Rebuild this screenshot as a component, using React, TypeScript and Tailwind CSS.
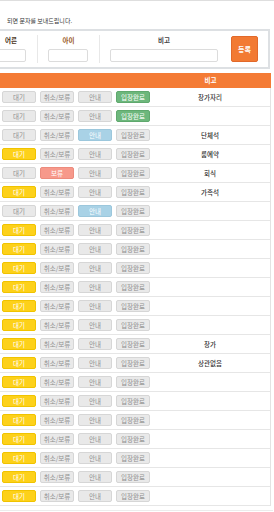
type Tone = "off" | "yellow" | "red" | "blue" | "green";

const toneClass: Record<Tone, string> = {
  off: "bg-[#e9e9e9] border-[#d6d6d6] text-[#8f8f8f]",
  yellow: "bg-[#fdd11a] border-[#f0c300] text-white",
  red: "bg-[#f7998b] border-[#ec8b7d] text-white",
  blue: "bg-[#a9d2e6] border-[#9cc7dc] text-white",
  green: "bg-[#6db77c] border-[#5fa86d] text-white",
};

const activeTone: Tone[] = ["yellow", "red", "blue", "green"];

const rows: { on: number; note: string }[] = [
  { on: 3, note: "창가자리" },
  { on: 3, note: "" },
  { on: 2, note: "단체석" },
  { on: 0, note: "룸예약" },
  { on: 1, note: "회식" },
  { on: 0, note: "가족석" },
  { on: 2, note: "" },
  { on: 0, note: "" },
  { on: 0, note: "" },
  { on: 0, note: "" },
  { on: 0, note: "" },
  { on: 0, note: "" },
  { on: 0, note: "" },
  { on: 0, note: "창가" },
  { on: 0, note: "상관없음" },
  { on: 0, note: "" },
  { on: 0, note: "" },
  { on: 0, note: "" },
  { on: 0, note: "" },
  { on: 0, note: "" },
  { on: 0, note: "" },
  { on: 0, note: "" },
];

const StateButton = ({ label, tone }: { label: string; tone: Tone }) => (
  <button
    className={`w-[34px] h-[12px] p-0 border rounded-[2px] text-[6.5px] leading-[10px] text-center ${toneClass[tone]}`}
  >
    {label}
  </button>
);

const Row = ({ on, note }: { on: number; note: string }) => {
  const labels = ["대기", on === 1 ? "보류" : "취소/보류", "안내", "입장완료"];
  return (
    <div className="h-[19px] border-b border-[#e6e6e6] flex items-center">
      <div className="w-[150px] pl-[2px] flex gap-[4px]">
        {labels.map((label, i) => (
          <StateButton key={i} label={label} tone={i === on ? activeTone[i] : "off"} />
        ))}
      </div>
      <div className="flex-1 text-center text-[6.5px] leading-[10px] font-medium text-[#333]">
        {note}
      </div>
    </div>
  );
};

const App = () => {
  return (
    <div
      className="w-[274px] h-[512px] overflow-hidden bg-white border-t border-[#dedede]"
      style={{ fontFamily: '"Noto Sans CJK KR", "Noto Sans", sans-serif' }}
    >
      <p className="pt-[16px] pl-[7px] h-[24px] text-[6px] leading-[8px] text-[#333] whitespace-nowrap">
        되면 문자를 보내드립니다.
      </p>

      {/* 등록 폼 */}
      <div className="mt-[4px] -ml-[27px] w-[297px] h-[40px] border-2 border-[#dde0e3] flex items-center">
        <div className="w-[63px] h-[28px] pt-[1px] border-r border-[#e8e8e8] flex flex-col">
          <span className="h-[8px] text-center text-[6.5px] leading-[8px] font-bold text-[#4a3520] pl-[10px]">어른</span>
          <input className="mt-[5px] ml-[11px] w-[40px] h-[13px] p-0 border border-[#dcdcdc] rounded-[2px] bg-white" />
        </div>
        <div className="w-[62px] h-[28px] pt-[1px] border-r border-[#e8e8e8] flex flex-col">
          <span className="h-[8px] text-center text-[6.5px] leading-[8px] font-bold text-[#9a5a28]">아이</span>
          <input className="mt-[5px] ml-[10px] w-[40px] h-[13px] p-0 border border-[#dcdcdc] rounded-[2px] bg-white" />
        </div>
        <div className="w-[131px] h-[28px] pt-[1px] flex flex-col">
          <span className="ml-[10px] w-[108px] h-[8px] text-center text-[6.5px] leading-[8px] font-bold text-[#444]">비고</span>
          <input className="mt-[5px] ml-[10px] w-[108px] h-[13px] p-0 border border-[#dcdcdc] rounded-[2px] bg-white" />
        </div>
        <button className="w-[27px] h-[26px] p-0 bg-[#f27a33] border border-[#e2692a] rounded-[2px] text-white text-[7px] font-semibold">
          등록
        </button>
      </div>

      {/* 대기 목록 */}
      <div className="mt-[4px] w-[271px] h-[15px] bg-[#f47b35] flex">
        <div className="w-[150px]" />
        <div className="flex-1 text-center text-white text-[6.5px] leading-[15px] font-bold">비고</div>
      </div>
      <div className="w-[271px] border-r border-[#e3e3e3]">
        {rows.map((r, i) => (
          <Row key={i} on={r.on} note={r.note} />
        ))}
      </div>
      <div className="mt-[4px] w-[273px] border-t border-[#ececec]" />
    </div>
  );
};

export default App;
